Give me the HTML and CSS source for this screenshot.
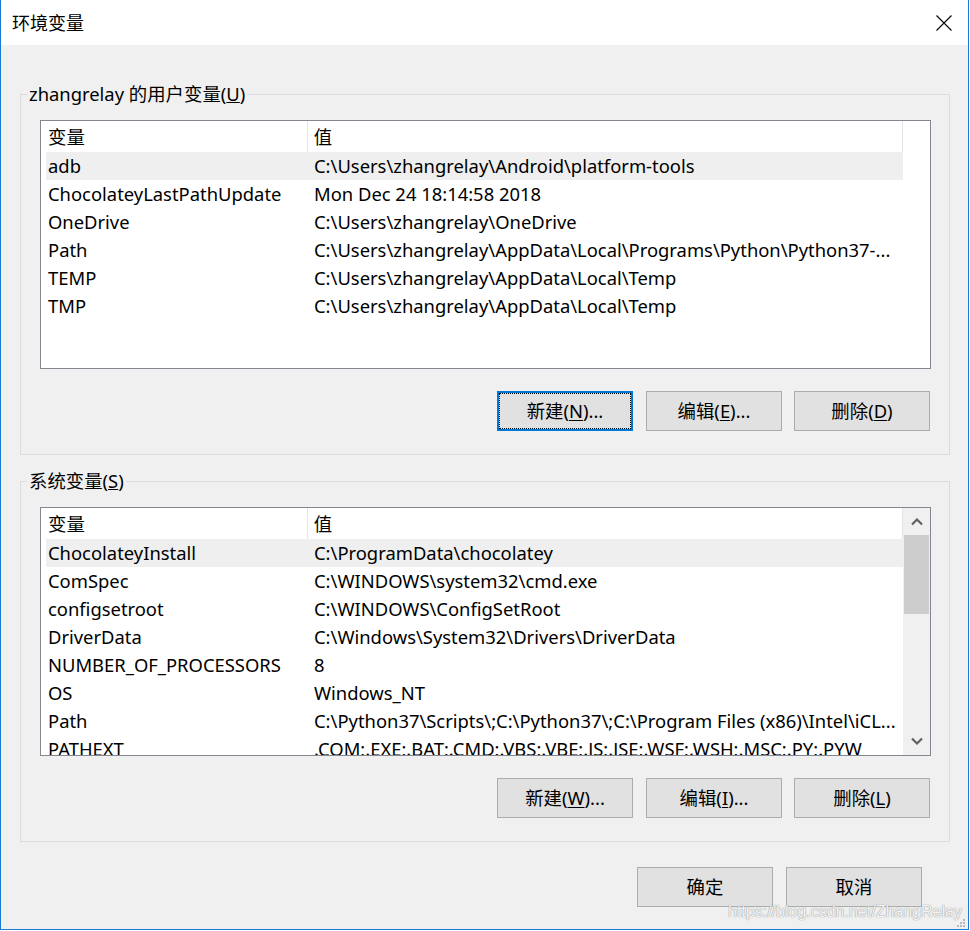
FILE: index.html
```html
<!DOCTYPE html>
<html lang="zh-CN">
<head>
<meta charset="utf-8">
<title>环境变量</title>
<link rel="stylesheet" href="styles.css">
</head>
<body>
<div class="window">
  <div class="titlebar">
    <span class="title">环境变量</span>
    <span class="close">
      <svg width="16" height="16" viewBox="0 0 16 16"><path d="M0.5 0.5 L15.5 15.5 M15.5 0.5 L0.5 15.5" stroke="#000" stroke-width="1.1" fill="none"/></svg>
    </span>
  </div>
  <div class="content">
    <fieldset class="group">
      <legend>zhangrelay 的用户变量(<u>U</u>)</legend>
      <div class="listbox">
        <div class="list-main">
          <div class="list-header"><div class="hcell c1">变量</div><div class="hcell c2">值</div></div>
          <div class="row sel"><div class="cell c1">adb</div><div class="cell c2">C:\Users\zhangrelay\Android\platform-tools</div></div>
          <div class="row"><div class="cell c1">ChocolateyLastPathUpdate</div><div class="cell c2">Mon Dec 24 18:14:58 2018</div></div>
          <div class="row"><div class="cell c1">OneDrive</div><div class="cell c2">C:\Users\zhangrelay\OneDrive</div></div>
          <div class="row"><div class="cell c1">Path</div><div class="cell c2">C:\Users\zhangrelay\AppData\Local\Programs\Python\Python37-...</div></div>
          <div class="row"><div class="cell c1">TEMP</div><div class="cell c2">C:\Users\zhangrelay\AppData\Local\Temp</div></div>
          <div class="row"><div class="cell c1">TMP</div><div class="cell c2">C:\Users\zhangrelay\AppData\Local\Temp</div></div>
        </div>
        <div class="list-gutter"></div>
      </div>
      <div class="btn-row">
        <button class="btn first focused">新建(<u>N</u>)...</button>
        <button class="btn">编辑(<u>E</u>)...</button>
        <button class="btn">删除(<u>D</u>)</button>
      </div>
    </fieldset>

    <fieldset class="group group-sys">
      <legend>系统变量(<u>S</u>)</legend>
      <div class="listbox">
        <div class="list-main">
          <div class="list-header"><div class="hcell c1">变量</div><div class="hcell c2">值</div></div>
          <div class="row sel"><div class="cell c1">ChocolateyInstall</div><div class="cell c2">C:\ProgramData\chocolatey</div></div>
          <div class="row"><div class="cell c1">ComSpec</div><div class="cell c2">C:\WINDOWS\system32\cmd.exe</div></div>
          <div class="row"><div class="cell c1">configsetroot</div><div class="cell c2">C:\WINDOWS\ConfigSetRoot</div></div>
          <div class="row"><div class="cell c1">DriverData</div><div class="cell c2">C:\Windows\System32\Drivers\DriverData</div></div>
          <div class="row"><div class="cell c1">NUMBER_OF_PROCESSORS</div><div class="cell c2">8</div></div>
          <div class="row"><div class="cell c1">OS</div><div class="cell c2">Windows_NT</div></div>
          <div class="row"><div class="cell c1">Path</div><div class="cell c2">C:\Python37\Scripts\;C:\Python37\;C:\Program Files (x86)\Intel\iCL...</div></div>
          <div class="row"><div class="cell c1">PATHEXT</div><div class="cell c2">.COM;.EXE;.BAT;.CMD;.VBS;.VBE;.JS;.JSE;.WSF;.WSH;.MSC;.PY;.PYW</div></div>
        </div>
        <div class="scrollbar">
          <div class="sb-arrow">
            <svg width="12" height="9" viewBox="0 0 12 9"><path d="M1 7.5 L6 2.5 L11 7.5" stroke="#606060" stroke-width="2.2" fill="none"/></svg>
          </div>
          <div class="sb-track"><div class="sb-thumb"></div></div>
          <div class="sb-arrow">
            <svg width="12" height="9" viewBox="0 0 12 9"><path d="M1 1.5 L6 6.5 L11 1.5" stroke="#606060" stroke-width="2.2" fill="none"/></svg>
          </div>
        </div>
      </div>
      <div class="btn-row">
        <button class="btn first">新建(<u>W</u>)...</button>
        <button class="btn">编辑(<u>I</u>)...</button>
        <button class="btn">删除(<u>L</u>)</button>
      </div>
    </fieldset>

    <div class="dialog-buttons">
      <button class="btn">确定</button>
      <button class="btn">取消</button>
    </div>
  </div>
  <div class="watermark">https://blog.csdn.net/ZhangRelay</div>
  <div class="grip">
    <svg width="9" height="9" viewBox="0 0 9 9"><g fill="#b8b8b8"><rect x="6" y="0" width="2" height="2"/><rect x="3" y="3" width="2" height="2"/><rect x="6" y="3" width="2" height="2"/><rect x="0" y="6" width="2" height="2"/><rect x="3" y="6" width="2" height="2"/><rect x="6" y="6" width="2" height="2"/></g></svg>
  </div>
</div>
</body>
</html>
```

FILE: styles.css
```css
html, body {
  margin: 0;
  padding: 0;
  background: #ffffff;
}

body {
  font-family: "Noto Sans", "Noto Sans CJK SC", sans-serif;
  font-size: 18.4px;
  color: #000;
}

.window {
  position: relative;
  box-sizing: border-box;
  width: 969px;
  height: 930px;
  border: 1px solid #1a7bd2;
  border-top: none;
  background: #f0f0f0;
  overflow: hidden;
}

.titlebar {
  height: 45px;
  background: #ffffff;
  display: flex;
  align-items: center;
  padding-left: 11px;
}

.title {
  font-size: 18px;
  line-height: 24px;
}

.close {
  margin-left: auto;
  width: 46px;
  height: 45px;
  display: flex;
  align-items: center;
  justify-content: center;
  margin-right: 1px;
}

.close svg {
  display: block;
}

.content {
  display: flex;
  flex-direction: column;
  padding-top: 37px;
}

.group {
  margin: 0 18px 0 19px;
  padding: 14px 18px 23px 19px;
  border: 1px solid #dcdcdc;
  min-inline-size: 0;
}

.group-sys {
  margin-top: 14px;
}

.group legend {
  margin-left: -13px;
  padding: 0 2px;
  line-height: 24px;
  font-size: 18.4px;
}

.listbox {
  box-sizing: border-box;
  height: 249px;
  border: 1px solid #828790;
  background: #ffffff;
  display: flex;
}

.list-main {
  flex: 1;
  padding-left: 5px;
  overflow: hidden;
}

.list-gutter {
  width: 27px;
}

.list-header {
  display: flex;
  height: 31px;
}

.hcell {
  box-sizing: border-box;
  border-right: 1px solid #e5e5e5;
  line-height: 31px;
  white-space: nowrap;
}

.row {
  display: flex;
  width: 857px;
  height: 28px;
}

.row.sel {
  background: #efefef;
}

.cell {
  box-sizing: border-box;
  line-height: 28px;
  white-space: nowrap;
  overflow: hidden;
}

.c1 {
  width: 262px;
  padding-left: 2px;
}

.c2 {
  width: 595px;
  padding-left: 6px;
}

.hcell.c2 {
  width: 596px;
}

.scrollbar {
  width: 27px;
  background: #f0f0f0;
  display: flex;
  flex-direction: column;
}

.sb-arrow {
  height: 27px;
  display: flex;
  align-items: center;
  justify-content: center;
}

.sb-arrow svg {
  display: block;
}

.sb-track {
  flex: 1;
  padding: 0 1px;
}

.sb-thumb {
  height: 79px;
  background: #cdcdcd;
}

.btn-row {
  display: flex;
  justify-content: flex-end;
  gap: 12px;
  margin: 22px 1px 0 0;
}

.btn-row .first {
  margin-right: 1px;
}

.btn {
  box-sizing: border-box;
  width: 136px;
  height: 40px;
  border: 1px solid #adadad;
  background: #e1e1e1;
  font-family: "Noto Sans", "Noto Sans CJK SC", sans-serif;
  font-size: 18.4px;
  color: #000;
  padding: 0;
  margin: 0;
  line-height: 24px;
}

.btn u {
  text-underline-offset: 2px;
}

.btn.focused {
  border: 2px solid #0078d7;
  outline: 1px dotted #000;
  outline-offset: -3px;
}

.dialog-buttons {
  display: flex;
  justify-content: flex-end;
  gap: 13px;
  margin: 25px 46px 0 0;
}

.watermark {
  position: absolute;
  left: 727px;
  top: 902px;
  font-family: "Liberation Sans", Arial, sans-serif;
  font-size: 16px;
  line-height: 20px;
  color: #f4f4f4;
  text-shadow: 0 0 1px #9a9a9a, 0 0 1px #9a9a9a;
  white-space: nowrap;
}

.grip {
  position: absolute;
  right: 2px;
  bottom: 1px;
}

.grip svg {
  display: block;
}
```
